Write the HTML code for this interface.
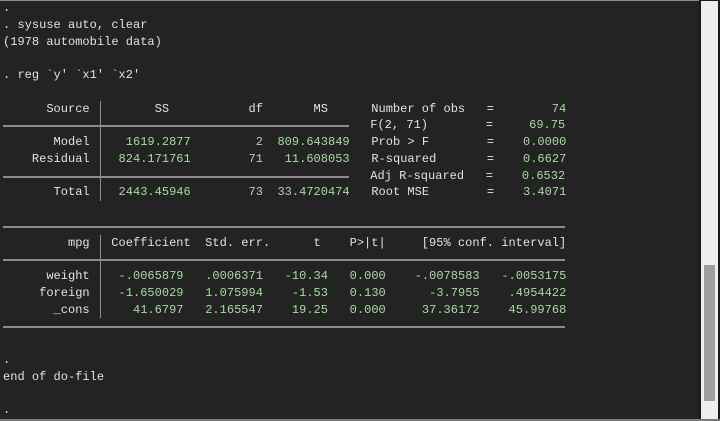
<!DOCTYPE html>
<html><head><meta charset="utf-8"><style>
html,body{margin:0;padding:0;width:720px;height:421px;overflow:hidden;background:#232323}
#con{position:absolute;left:0;top:0;width:699px;height:421px;background:#232323;border-top:1px solid #8a8a8a;box-sizing:border-box}
#sb{position:absolute;left:699px;top:0;width:21px;height:421px;background:#1a1a1a}
#sbi{position:absolute;left:701px;top:1px;width:17px;height:418px;background:#efefef}
#th{position:absolute;left:704px;top:265px;width:11px;height:136px;background:#9e9e9e}
#bot{position:absolute;left:0;top:419px;width:720px;height:2px;background:#7a7a7a}
pre{position:absolute;left:3px;top:0;margin:0;font-family:"Liberation Mono",monospace;font-size:12px;line-height:16.75px;color:#e2e2e2;letter-spacing:0.02px}
.g{color:#a5dd9e}
.h{display:inline-block;vertical-align:top;height:16.75px;background:linear-gradient(#8c8c8c,#8c8c8c) 0 8px/100% 2px no-repeat}
.v{display:inline-block;vertical-align:top;width:7.2px;height:16.75px;background:linear-gradient(#8c8c8c,#8c8c8c) 3px 0/1px 100% no-repeat}
.x{display:inline-block;vertical-align:top;width:7.2px;height:16.75px;background:linear-gradient(#8c8c8c,#8c8c8c) 3px 0/1px 100% no-repeat,linear-gradient(#8c8c8c,#8c8c8c) 0 8px/100% 2px no-repeat}
</style></head><body>
<div id="con"></div><div id="sb"></div><div id="sbi"></div><div id="th"></div><div id="bot"></div>
<pre>.
. sysuse auto, clear
(1978 automobile data)

. reg `y' `x1' `x2'

      Source <span class="v"></span>       SS           df       MS      Number of obs   =        <span class="g">74</span>
<span class="h" style="width:93.6px"></span><span class="x"></span><span class="h" style="width:244.8px"></span>   F(2, 71)        =     <span class="g">69.75</span>
       Model <span class="v"></span>   <span class="g">1619.2877</span>         <span class="g">2</span>  <span class="g">809.643849</span>   Prob &gt; F        =    <span class="g">0.0000</span>
    Residual <span class="v"></span>  <span class="g">824.171761</span>        <span class="g">71</span>   <span class="g">11.608053</span>   R-squared       =    <span class="g">0.6627</span>
<span class="h" style="width:93.6px"></span><span class="x"></span><span class="h" style="width:244.8px"></span>   Adj R-squared   =    <span class="g">0.6532</span>
       Total <span class="v"></span>  <span class="g">2443.45946</span>        <span class="g">73</span>  <span class="g">33.4720474</span>   Root MSE        =    <span class="g">3.4071</span>

<span class="h" style="width:561.6px"></span>
         mpg <span class="v"></span> Coefficient  Std. err.      t    P&gt;|t|     [95% conf. interval]
<span class="h" style="width:93.6px"></span><span class="x"></span><span class="h" style="width:460.8px"></span>
      weight <span class="v"></span>  <span class="g">-.0065879</span>   <span class="g">.0006371</span>   <span class="g">-10.34</span>   <span class="g">0.000</span>    <span class="g">-.0078583</span>   <span class="g">-.0053175</span>
     foreign <span class="v"></span>  <span class="g">-1.650029</span>   <span class="g">1.075994</span>    <span class="g">-1.53</span>   <span class="g">0.130</span>      <span class="g">-3.7955</span>    <span class="g">.4954422</span>
       _cons <span class="v"></span>    <span class="g">41.6797</span>   <span class="g">2.165547</span>    <span class="g">19.25</span>   <span class="g">0.000</span>     <span class="g">37.36172</span>    <span class="g">45.99768</span>
<span class="h" style="width:561.6px"></span>

.
end of do-file

.</pre>
</body></html>
